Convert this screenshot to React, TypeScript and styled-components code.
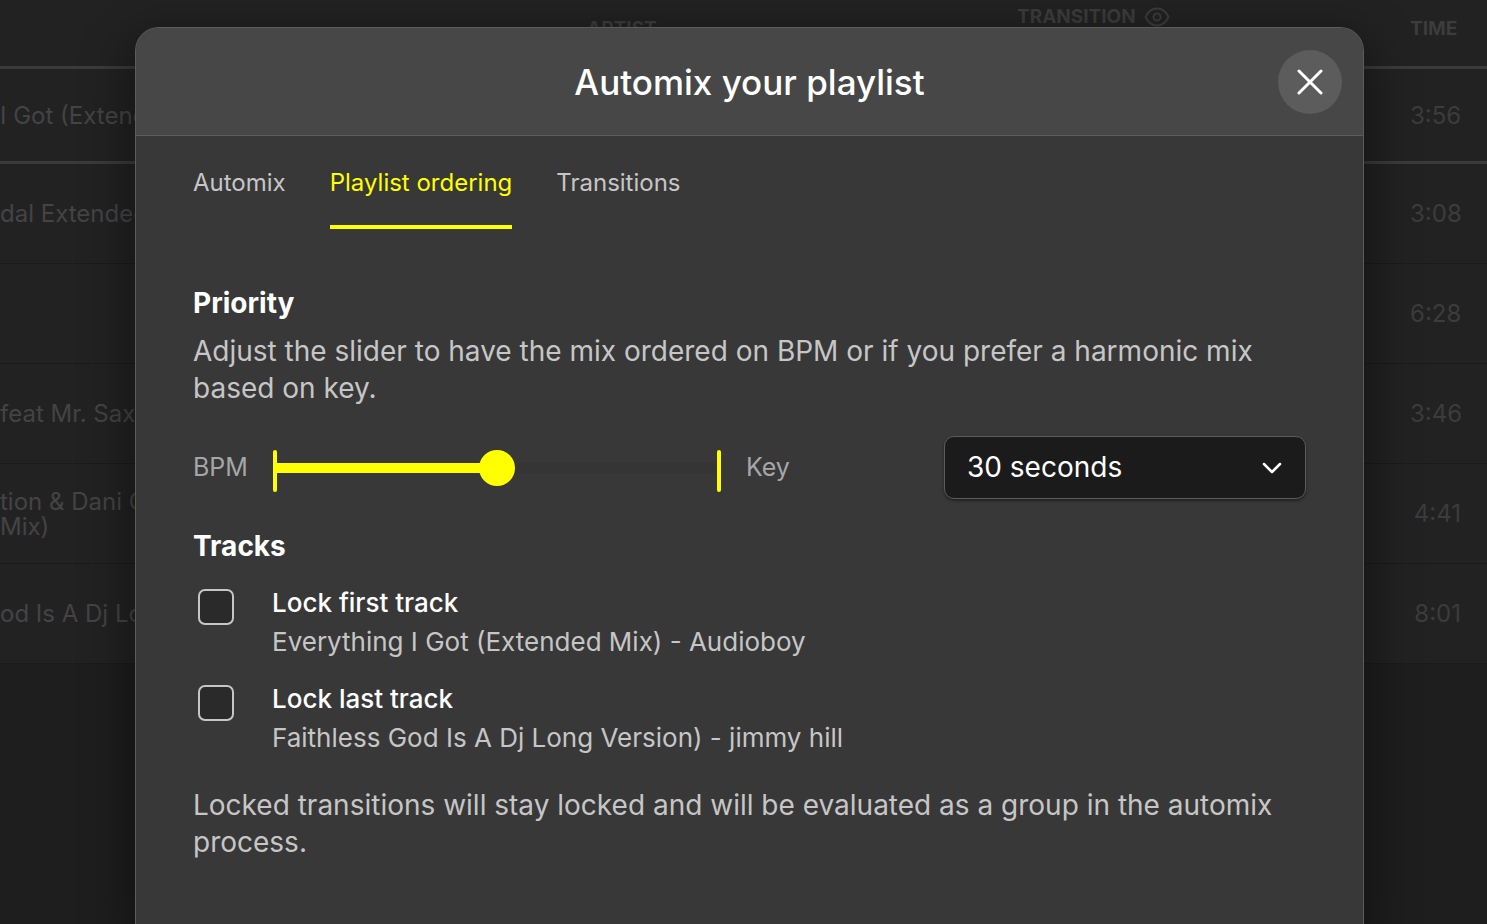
import React from "react";
import styled, { createGlobalStyle, css } from "styled-components";

const GlobalStyle = createGlobalStyle`
  *, *::before, *::after { box-sizing: border-box; }
  body {
    margin: 0;
    background: #1e1e1e;
    font-family: "Inter", "Liberation Sans", sans-serif;
    overflow: hidden;
  }
  button, input, select { font: inherit; }
`;

const Page = styled.div`
  position: relative;
  height: 100vh;
  overflow: hidden;
`;

const Playlist = styled.table`
  width: 100%;
  table-layout: fixed;
  border-collapse: separate;
  border-spacing: 0;
  color: #444444;
  background: #222222;
`;

const HeadCell = styled.th<{ $width?: number; $top?: boolean }>`
  height: 66px;
  width: ${(p) => (p.$width ? `${p.$width}px` : "auto")};
  padding: ${(p) => (p.$top ? "7px 0 0" : "19px 0 0")};
  vertical-align: top;
  text-align: left;
  font-size: 19px;
  line-height: 20px;
  font-weight: 700;
  color: #3c3c3c;
  text-transform: uppercase;
  white-space: nowrap;
`;

const HeadLabel = styled.span`
  display: flex;
  align-items: center;
  gap: 8px;
`;

const TrackRow = styled.tr<{ $selected?: boolean }>`
  height: ${(p) => (p.$selected ? 98 : 100)}px;

  & > td {
    ${(p) =>
      p.$selected
        ? css`
            border-top: 3px solid #3b3b3b;
            border-bottom: 3px solid #3b3b3b;
          `
        : css`
            border-bottom: 1px solid #1b1b1b;
          `}
  }
`;

const TrackCell = styled.td`
  padding: 0;
  font-size: 24px;
  line-height: 25px;
  white-space: pre;
  overflow: hidden;
`;

const TimeCell = styled(TrackCell)`
  padding-right: 26px;
  text-align: right;
  color: #3c3c3c;
`;

const Overlay = styled.div`
  position: absolute;
  inset: 0;
  display: flex;
  padding: 27px 123px 0 135px;
`;

const Dialog = styled.section`
  flex: 1;
  border: 1px solid #5c5c5c;
  border-bottom: 0;
  border-radius: 24px 24px 0 0;
  background: #383838;
  box-shadow: 0 16px 48px 8px rgba(0, 0, 0, 0.4);
  overflow: hidden;
`;

const DialogHeader = styled.header`
  display: grid;
  grid-template-columns: 64px 1fr 64px;
  align-items: center;
  height: 108px;
  padding: 0 21px;
  border-bottom: 1px solid #5c5c5c;
  background: #474747;
`;

const Title = styled.h1`
  grid-column: 2;
  margin: 0;
  text-align: center;
  font-size: 35px;
  line-height: 44px;
  font-weight: 500;
  color: #ffffff;
`;

const CloseButton = styled.button`
  display: grid;
  place-items: center;
  width: 64px;
  height: 64px;
  padding: 0;
  border: 0;
  border-radius: 50%;
  background: #5c5c5c;
  color: #ffffff;
`;

const DialogBody = styled.div`
  padding: 28px 57px;
  color: #c6c6c6;
  font-size: 28px;
  line-height: 37px;
`;

const Tabs = styled.nav`
  display: flex;
  gap: 44px;
  margin-bottom: 56px;
`;

const Tab = styled.button<{ $active?: boolean }>`
  padding: 0 0 24px;
  border: 0;
  border-bottom: 4px solid ${(p) => (p.$active ? "#ffff00" : "transparent")};
  background: none;
  color: ${(p) => (p.$active ? "#ffff00" : "#c6c6c6")};
  font-size: 24px;
  line-height: 37px;
`;

const SectionTitle = styled.h2`
  margin: 0;
  font-size: 28px;
  line-height: 37px;
  font-weight: 700;
  color: #ffffff;
`;

const Text = styled.p`
  margin: 11px 0 0;
`;

const PriorityRow = styled.div`
  display: flex;
  align-items: center;
  justify-content: space-between;
  margin: 29px 0;
`;

const SliderGroup = styled.div`
  display: flex;
  align-items: center;
  gap: 25px;
`;

const SliderLabel = styled.label`
  min-width: 54px;
  color: #a6a6a6;
  font-size: 25px;
`;

const SliderTrack = styled.div`
  display: flex;
  align-items: flex-start;
  width: 448px;
  height: 42px;
  margin-top: 6px;
`;

const SliderEnd = styled.span`
  width: 4px;
  height: 42px;
  border-radius: 2px;
  background: #ffff00;
`;

const Slider = styled.input`
  flex: 1;
  min-width: 0;
  height: 36px;
  margin: 0;
  appearance: none;
  background: none;

  &::-webkit-slider-runnable-track {
    height: 10px;
    background: linear-gradient(to right, #ffff00 50%, #353535 50%);
  }

  &::-webkit-slider-thumb {
    appearance: none;
    width: 36px;
    height: 36px;
    margin-top: -13px;
    border-radius: 50%;
    background: #ffff00;
  }
`;

const SelectBox = styled.div`
  display: grid;
  align-items: center;
  width: 362px;

  & > * {
    grid-area: 1 / 1;
  }

  & > svg {
    justify-self: end;
    margin-right: 24px;
    pointer-events: none;
  }
`;

const Select = styled.select`
  width: 100%;
  height: 63px;
  padding: 0 22px;
  appearance: none;
  border: 1px solid #5c5c5c;
  border-radius: 10px;
  background: #1b1b1b;
  box-shadow: 0 2px 3px rgba(0, 0, 0, 0.4);
  color: #ffffff;
  font-size: 28px;
`;

const LockOption = styled.label`
  display: flex;
  align-items: flex-start;
  gap: 38px;
  margin: 18px 0 0 5px;
`;

const Checkbox = styled.input`
  width: 36px;
  height: 36px;
  margin: 6px 0 0;
  appearance: none;
  border: 2px solid #c6c6c6;
  border-radius: 7px;
  background: #2a2a2a;
`;

const LockText = styled.span`
  display: grid;
  font-size: 26px;
  line-height: 39px;
`;

const LockName = styled.span`
  font-weight: 500;
  color: #ffffff;
`;

const FootNote = styled(Text)`
  margin-top: 30px;
`;

const tracks = [
  { title: "I Got (Extended Mix)", time: "3:56" },
  { title: "dal Extended Mix)", time: "3:08" },
  { title: "", time: "6:28" },
  { title: "feat Mr. Saxobeat", time: "3:46" },
  { title: "tion & Dani C\nMix)", time: "4:41" },
  { title: "od Is A Dj Long Version)", time: "8:01" },
];

const EyeIcon = () => (
  <svg width="26" height="20" viewBox="0 0 26 20" fill="none" stroke="currentColor" strokeWidth="2" strokeLinejoin="round" aria-hidden="true">
    <path d="M1.500 10C4 4.500 8 1.500 13 1.500S22 4.500 24.500 10C22 15.500 18 18.500 13 18.500S4 15.500 1.500 10Z" />
    <circle cx="13" cy="10" r="3.500" />
  </svg>
);

const CloseIcon = () => (
  <svg width="26" height="26" viewBox="0 0 26 26" fill="none" stroke="currentColor" strokeWidth="3" strokeLinecap="round" aria-hidden="true">
    <path d="M2 2L24 24M24 2L2 24" />
  </svg>
);

const ChevronIcon = () => (
  <svg width="20" height="12" viewBox="0 0 20 12" fill="none" stroke="#ffffff" strokeWidth="2.500" strokeLinecap="round" strokeLinejoin="round" aria-hidden="true">
    <path d="M2 2L10 10L18 2" />
  </svg>
);

export default function App() {
  return (
    <Page>
      <GlobalStyle />
      <Playlist>
        <thead>
          <tr>
            <HeadCell $width={587} />
            <HeadCell $width={430}>Artist</HeadCell>
            <HeadCell $top>
              <HeadLabel>
                Transition <EyeIcon />
              </HeadLabel>
            </HeadCell>
            <HeadCell $width={77}>Time</HeadCell>
          </tr>
        </thead>
        <tbody>
          {tracks.map((track, i) => (
            <TrackRow key={track.time} $selected={i === 0}>
              <TrackCell>{track.title}</TrackCell>
              <TrackCell />
              <TrackCell />
              <TimeCell>{track.time}</TimeCell>
            </TrackRow>
          ))}
        </tbody>
      </Playlist>

      <Overlay>
        <Dialog role="dialog" aria-modal="true" aria-labelledby="dialog-title">
          <DialogHeader>
            <Title id="dialog-title">Automix your playlist</Title>
            <CloseButton type="button" aria-label="Close">
              <CloseIcon />
            </CloseButton>
          </DialogHeader>
          <DialogBody>
            <Tabs>
              <Tab type="button">Automix</Tab>
              <Tab type="button" $active>
                Playlist ordering
              </Tab>
              <Tab type="button">Transitions</Tab>
            </Tabs>

            <SectionTitle>Priority</SectionTitle>
            <Text>
              Adjust the slider to have the mix ordered on BPM or if you prefer a harmonic mix based on key.
            </Text>

            <PriorityRow>
              <SliderGroup>
                <SliderLabel htmlFor="priority">BPM</SliderLabel>
                <SliderTrack>
                  <SliderEnd />
                  <Slider id="priority" type="range" min="0" max="100" defaultValue="50" />
                  <SliderEnd />
                </SliderTrack>
                <SliderLabel htmlFor="priority">Key</SliderLabel>
              </SliderGroup>
              <SelectBox>
                <Select aria-label="Transition length" defaultValue="30">
                  <option value="30">30 seconds</option>
                </Select>
                <ChevronIcon />
              </SelectBox>
            </PriorityRow>

            <SectionTitle>Tracks</SectionTitle>
            <LockOption>
              <Checkbox type="checkbox" />
              <LockText>
                <LockName>Lock first track</LockName>
                <span>Everything I Got (Extended Mix) - Audioboy</span>
              </LockText>
            </LockOption>
            <LockOption>
              <Checkbox type="checkbox" />
              <LockText>
                <LockName>Lock last track</LockName>
                <span>Faithless God Is A Dj Long Version) - jimmy hill</span>
              </LockText>
            </LockOption>

            <FootNote>
              Locked transitions will stay locked and will be evaluated as a group in the automix process.
            </FootNote>
          </DialogBody>
        </Dialog>
      </Overlay>
    </Page>
  );
}
